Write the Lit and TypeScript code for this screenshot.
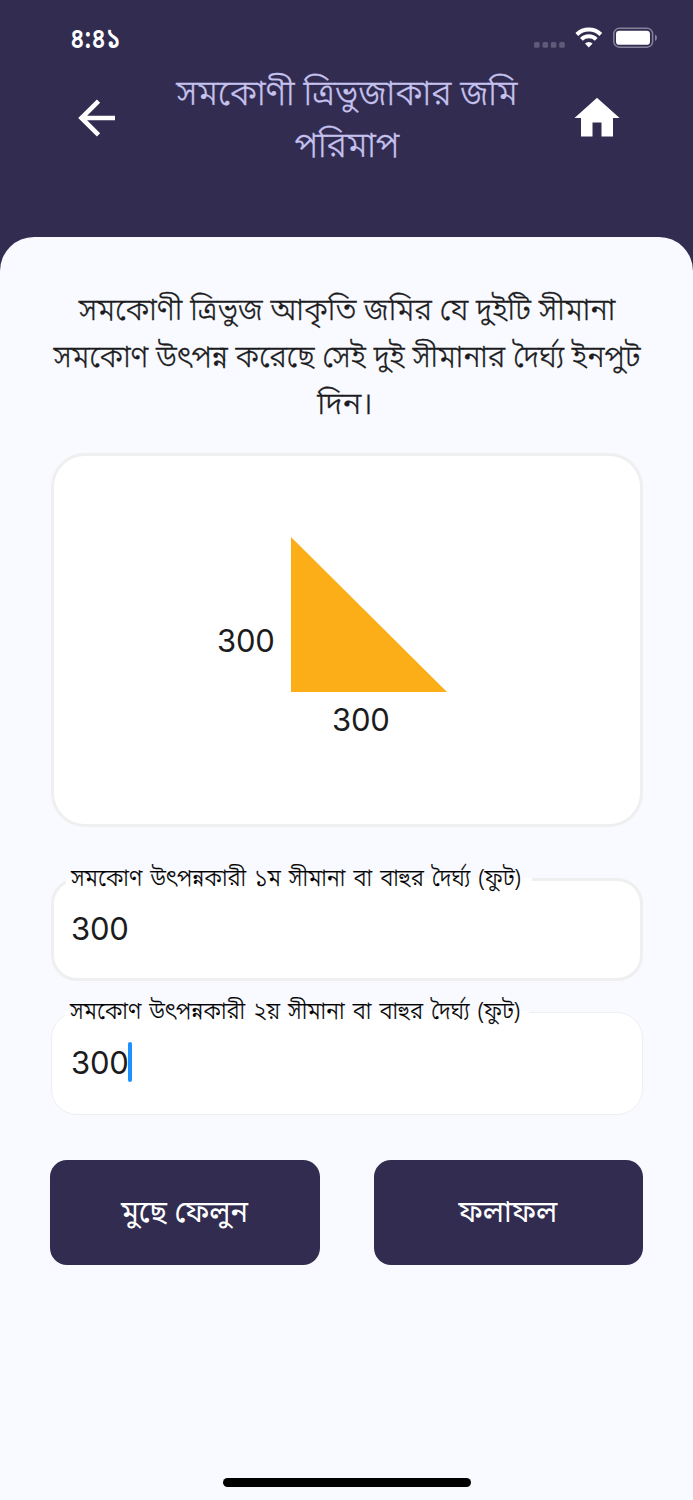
import { LitElement, html, css, svg } from "lit";
import { customElement, property } from "lit/decorators.js";

@customElement("outlined-field")
class OutlinedField extends LitElement {
  @property() label = "";
  @property() value = "";
  @property({ type: Boolean, reflect: true }) focused = false;

  static styles = css`
    :host { display: block; }
    .frame {
      box-sizing: border-box; height: 103px; border: 3.4px solid #efefef; border-radius: 26px;
      background: #fff; position: relative; padding: 0 17.5px; display: flex; align-items: center;
    }
    :host([focused]) .frame { border-width: 1.7px; padding: 0 19.5px; }
    .label {
      position: absolute; left: 12px; top: -20px; height: 38px; line-height: 38px; width: 466px;
      padding-left: 5px; box-sizing: border-box; font-size: 24.5px; font-weight: 300; color: #000; white-space: nowrap;
      background: linear-gradient(#f9faff 0 17px, #fff 17px); -webkit-text-stroke: 0.2px #000;
    }
    :host([focused]) .label { left: 13px; top: -19px; width: 464px; padding-left: 5.5px; }
    .label span { display: inline-block; transform: scaleX(0.91); transform-origin: left; word-spacing: 2.5px; }
    .value { font: 31px/40px Inter, sans-serif; letter-spacing: -0.2px; color: #1c1c1e; margin-top: -1px; }
    .caret { width: 4px; height: 40px; border-radius: 2px; background: #1e90ff; margin: -3px 0 0 -1px; }
  `;

  render() {
    return html`<div class="frame">
      <span class="label"><span>${this.label}</span></span>
      <span class="value">${this.value}</span>
      ${this.focused ? html`<span class="caret"></span>` : ""}
    </div>`;
  }
}

@customElement("app-root")
class AppRoot extends LitElement {
  static styles = css`
    :host {
      display: flex; flex-direction: column; width: 693px; height: 1500px; overflow: hidden;
      background: #322d50; font-family: "Noto Sans Bengali", "Noto Sans", sans-serif;
    }
    svg { display: block; flex: none; }
    .status { height: 76px; display: flex; justify-content: space-between; padding: 0 36px 0 70px; box-sizing: border-box; }
    .time { color: #fff; font-size: 28.5px; font-weight: 600; line-height: 82px; height: 76px; transform: scaleX(0.85); transform-origin: left; }
    .status svg { margin-top: 22px; }
    .bar { height: 161px; box-sizing: border-box; display: flex; justify-content: space-between; padding: 0 73px 0 78px; }
    .back { margin-top: 23px; }
    .home { margin-top: 22px; }
    .title { margin: -6px 0 0 3px; font-weight: 300; font-size: 35px; line-height: 52px; color: #c6c2ef; text-align: center; white-space: nowrap; transform: scaleX(0.981); -webkit-text-stroke: 0.3px #c6c2ef; }
    .title span, .intro span { display: block; }
    .panel { flex: 1; background: #f9faff; border-radius: 34px 34px 0 0; padding: 52px 50.5px 0; display: flex; flex-direction: column; }
    .intro { margin: 0 -20px; font-size: 31px; font-weight: 300; line-height: 47px; color: #1c1c1e; text-align: center; white-space: nowrap; height: 164px; -webkit-text-stroke: 0.3px #1c1c1e; }
    .l1 { transform: scaleX(0.969); }
    .l2 { transform: scaleX(0.957); }
    .l3 { transform: translateX(-2px) scaleX(1.04); }
    .card { box-sizing: border-box; height: 374px; border: 3.4px solid #efefef; border-radius: 34px; background: #fff; display: flex; justify-content: center; padding: 81px 29px 0 0; }
    .figure { display: grid; grid-template-columns: 74px 156px; grid-template-rows: 155px 54px; height: 209px; }
    .num { font: 31px/40px Inter, sans-serif; color: #1c1c1e; letter-spacing: -0.2px; }
    .side { align-self: end; margin-bottom: 31px; }
    .base { grid-column: 2; padding: 8px 0 0 41px; }
    .first { margin-top: 51px; }
    .second { margin-top: 31px; }
    .actions { display: flex; gap: 54px; margin: 45px -0.3px 0; }
    .btn { flex: 1; height: 105px; border: 0; border-radius: 17px; background: #322d50; color: #fff; font: 400 30px/1 "Noto Sans Bengali", "Noto Sans", sans-serif; padding: 3px 0 0; }
    .btn span { display: inline-block; transform: scaleX(0.97); }
    .indicator { width: 248px; height: 9px; border-radius: 5px; background: #000; margin: auto auto 13px; }
  `;

  render() {
    return html`
      <div class="status">
        <span class="time">৪:৪১</span>
        <svg width="124" height="32" viewBox="533 22 124 32">
          ${[534, 542.5, 550.8, 559.2].map((x) => svg`<rect x=${x} y="42" width="5.6" height="5.8" rx="1.5" fill="#5f5a77"/>`)}
          <g fill="none" stroke="#fff" stroke-width="4">
            <path d="M576.8 34.500a17.200 17.200 0 0 1 24 0"/>
            <path d="M581.4 39.300a10.500 10.500 0 0 1 14.800 0"/>
          </g>
          <path d="M585 43.600a5.400 5.400 0 0 1 7.600 0l-3.800 4z" fill="#fff"/>
          <rect x="613.8" y="28.3" width="38.8" height="18.9" rx="5.5" fill="none" stroke="#84819a" stroke-width="1.5"/>
          <rect x="616" y="30.8" width="34" height="14" rx="3.4" fill="#fff"/>
          <path d="M655 34.500q2 1 2 3.300t-2 3.300z" fill="#84819a"/>
        </svg>
      </div>
      <div class="bar">
        <svg class="back" width="38" height="38" viewBox="78 99 38 38">
          <path d="M98.500 101.200 81.500 118 98.500 134.800M81.500 118H115" fill="none" stroke="#fff" stroke-width="4.6"/>
        </svg>
        <h1 class="title"><span>সমকোণী ত্রিভুজাকার জমি</span><span>পরিমাপ</span></h1>
        <svg class="home" width="46" height="40" viewBox="574 98 46 40">
          <path d="M597 97.800 619.600 118H613v18.500h-11.500v-14h-9v14H581V118h-6.500z" fill="#fff"/>
        </svg>
      </div>
      <main class="panel">
        <p class="intro">
          <span class="l1">সমকোণী ত্রিভুজ আকৃতি জমির যে দুইটি সীমানা</span>
          <span class="l2">সমকোণ উৎপন্ন করেছে সেই দুই সীমানার দৈর্ঘ্য ইনপুট</span>
          <span class="l3">দিন।</span>
        </p>
        <section class="card">
          <div class="figure">
            <span class="num side">300</span>
            <svg width="156" height="155" viewBox="0 0 156 155"><path d="M0 0V155H156z" fill="#fbae17"/></svg>
            <span class="num base">300</span>
          </div>
        </section>
        <outlined-field class="first" label="সমকোণ উৎপন্নকারী ১ম সীমানা বা বাহুর দৈর্ঘ্য (ফুট)" value="300"></outlined-field>
        <outlined-field class="second" label="সমকোণ উৎপন্নকারী ২য় সীমানা বা বাহুর দৈর্ঘ্য (ফুট)" value="300" focused></outlined-field>
        <div class="actions">
          <button class="btn"><span>মুছে ফেলুন</span></button>
          <button class="btn"><span>ফলাফল</span></button>
        </div>
        <div class="indicator"></div>
      </main>`;
  }
}
